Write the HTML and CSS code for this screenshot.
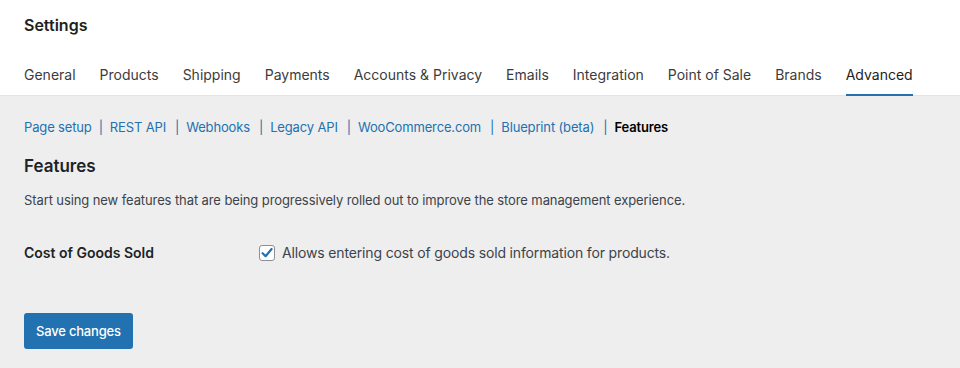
FILE: index.html
```html
<!DOCTYPE html>
<html>
<head>
<meta charset="utf-8">
<link rel="stylesheet" href="styles.css">
</head>
<body>
<header class="top">
  <h1 class="title">Settings</h1>
  <nav class="tabs">
    <a class="tab">General</a>
    <a class="tab">Products</a>
    <a class="tab">Shipping</a>
    <a class="tab">Payments</a>
    <a class="tab">Accounts &amp; Privacy</a>
    <a class="tab">Emails</a>
    <a class="tab">Integration</a>
    <a class="tab">Point of Sale</a>
    <a class="tab">Brands</a>
    <a class="tab active">Advanced</a>
  </nav>
</header>
<main class="content">
  <ul class="subnav">
    <li><a class="sublink">Page setup</a><span class="sep first">|</span></li>
    <li><a class="sublink">REST API</a><span class="sep">|</span></li>
    <li><a class="sublink">Webhooks</a><span class="sep">|</span></li>
    <li><a class="sublink">Legacy API</a><span class="sep">|</span></li>
    <li><a class="sublink">WooCommerce.com</a><span class="sep">|</span></li>
    <li><a class="sublink">Blueprint (beta)</a><span class="sep">|</span></li>
    <li><a class="sublink current">Features</a></li>
  </ul>
  <h2 class="heading">Features</h2>
  <p class="desc">Start using new features that are being progressively rolled out to improve the store management experience.</p>
  <div class="row">
    <div class="label">Cost of Goods Sold</div>
    <label class="field">
      <span class="check">
        <svg width="12" height="12" viewBox="0 0 12 12"><path d="M1.6 6.2 L4.6 9.2 L10.6 2" fill="none" stroke="#2271b1" stroke-width="2.2" stroke-linecap="round" stroke-linejoin="round"/></svg>
      </span>
      <span class="field-text">Allows entering cost of goods sold information for products.</span>
    </label>
  </div>
  <button class="save">Save changes</button>
</main>
</body>
</html>
```
FILE: styles.css
```css
html, body {
  margin: 0;
  padding: 0;
  height: 100%;
}
body {
  font-family: Inter, "Noto Sans", "Liberation Sans", sans-serif;
  background: #eeeeee;
  color: #1d2327;
}
.top {
  background: #ffffff;
  border-bottom: 1px solid #e4e4e4;
  padding: 0 24px;
}
.title {
  margin: 0;
  padding-top: 15px;
  font-size: 16px;
  font-weight: 600;
  line-height: 21px;
  color: #1e1e1e;
}
.tabs {
  display: flex;
  gap: 24px;
  margin-top: 29px;
}
.tab {
  display: block;
  font-size: 14px;
  line-height: 20px;
  padding-bottom: 9px;
  color: #3c3c3c;
  font-weight: 400;
  border-bottom: 2px solid transparent;
  margin-bottom: -1px;
}
.tab.active {
  color: #1e1e1e;
  border-bottom-color: #2271b1;
}
.content {
  padding: 0 24px;
}
.subnav {
  list-style: none;
  margin: 0;
  padding: 22px 0 0;
  display: flex;
  font-size: 13px;
  line-height: 18px;
  letter-spacing: -0.15px;
}
.subnav li {
  display: flex;
}
.sublink {
  color: #2271b1;
}
.sublink.current {
  color: #000;
  font-weight: 600;
}
.sep {
  color: #2271b1;
  margin: 0 7px 0 9px;
}
.sep.first {
  margin-left: 7px;
}
.heading {
  margin: 18px 0 0;
  font-size: 17px;
  font-weight: 600;
  line-height: 24px;
  color: #1d2327;
}
.desc {
  margin: 13px 0 0;
  font-size: 13px;
  line-height: 18px;
  color: #3c434a;
  letter-spacing: -0.1px;
}
.row {
  display: flex;
  align-items: center;
  margin-top: 35px;
}
.label {
  width: 235px;
  font-size: 14px;
  font-weight: 600;
  color: #1d2327;
}
.field {
  display: flex;
  align-items: center;
  gap: 7px;
}
.check {
  width: 14px;
  height: 14px;
  border: 1px solid #8c8f94;
  border-radius: 3px;
  background: #fff;
  display: flex;
  align-items: center;
  justify-content: center;
}
.field-text {
  font-size: 14px;
  color: #3c434a;
  letter-spacing: -0.15px;
}
.save {
  display: block;
  margin-top: 52px;
  height: 36px;
  padding: 0 12px;
  border: none;
  border-radius: 3px;
  background: #2271b1;
  color: #fff;
  font-family: inherit;
  font-size: 13px;
  font-weight: 500;
  letter-spacing: -0.2px;
}
```
